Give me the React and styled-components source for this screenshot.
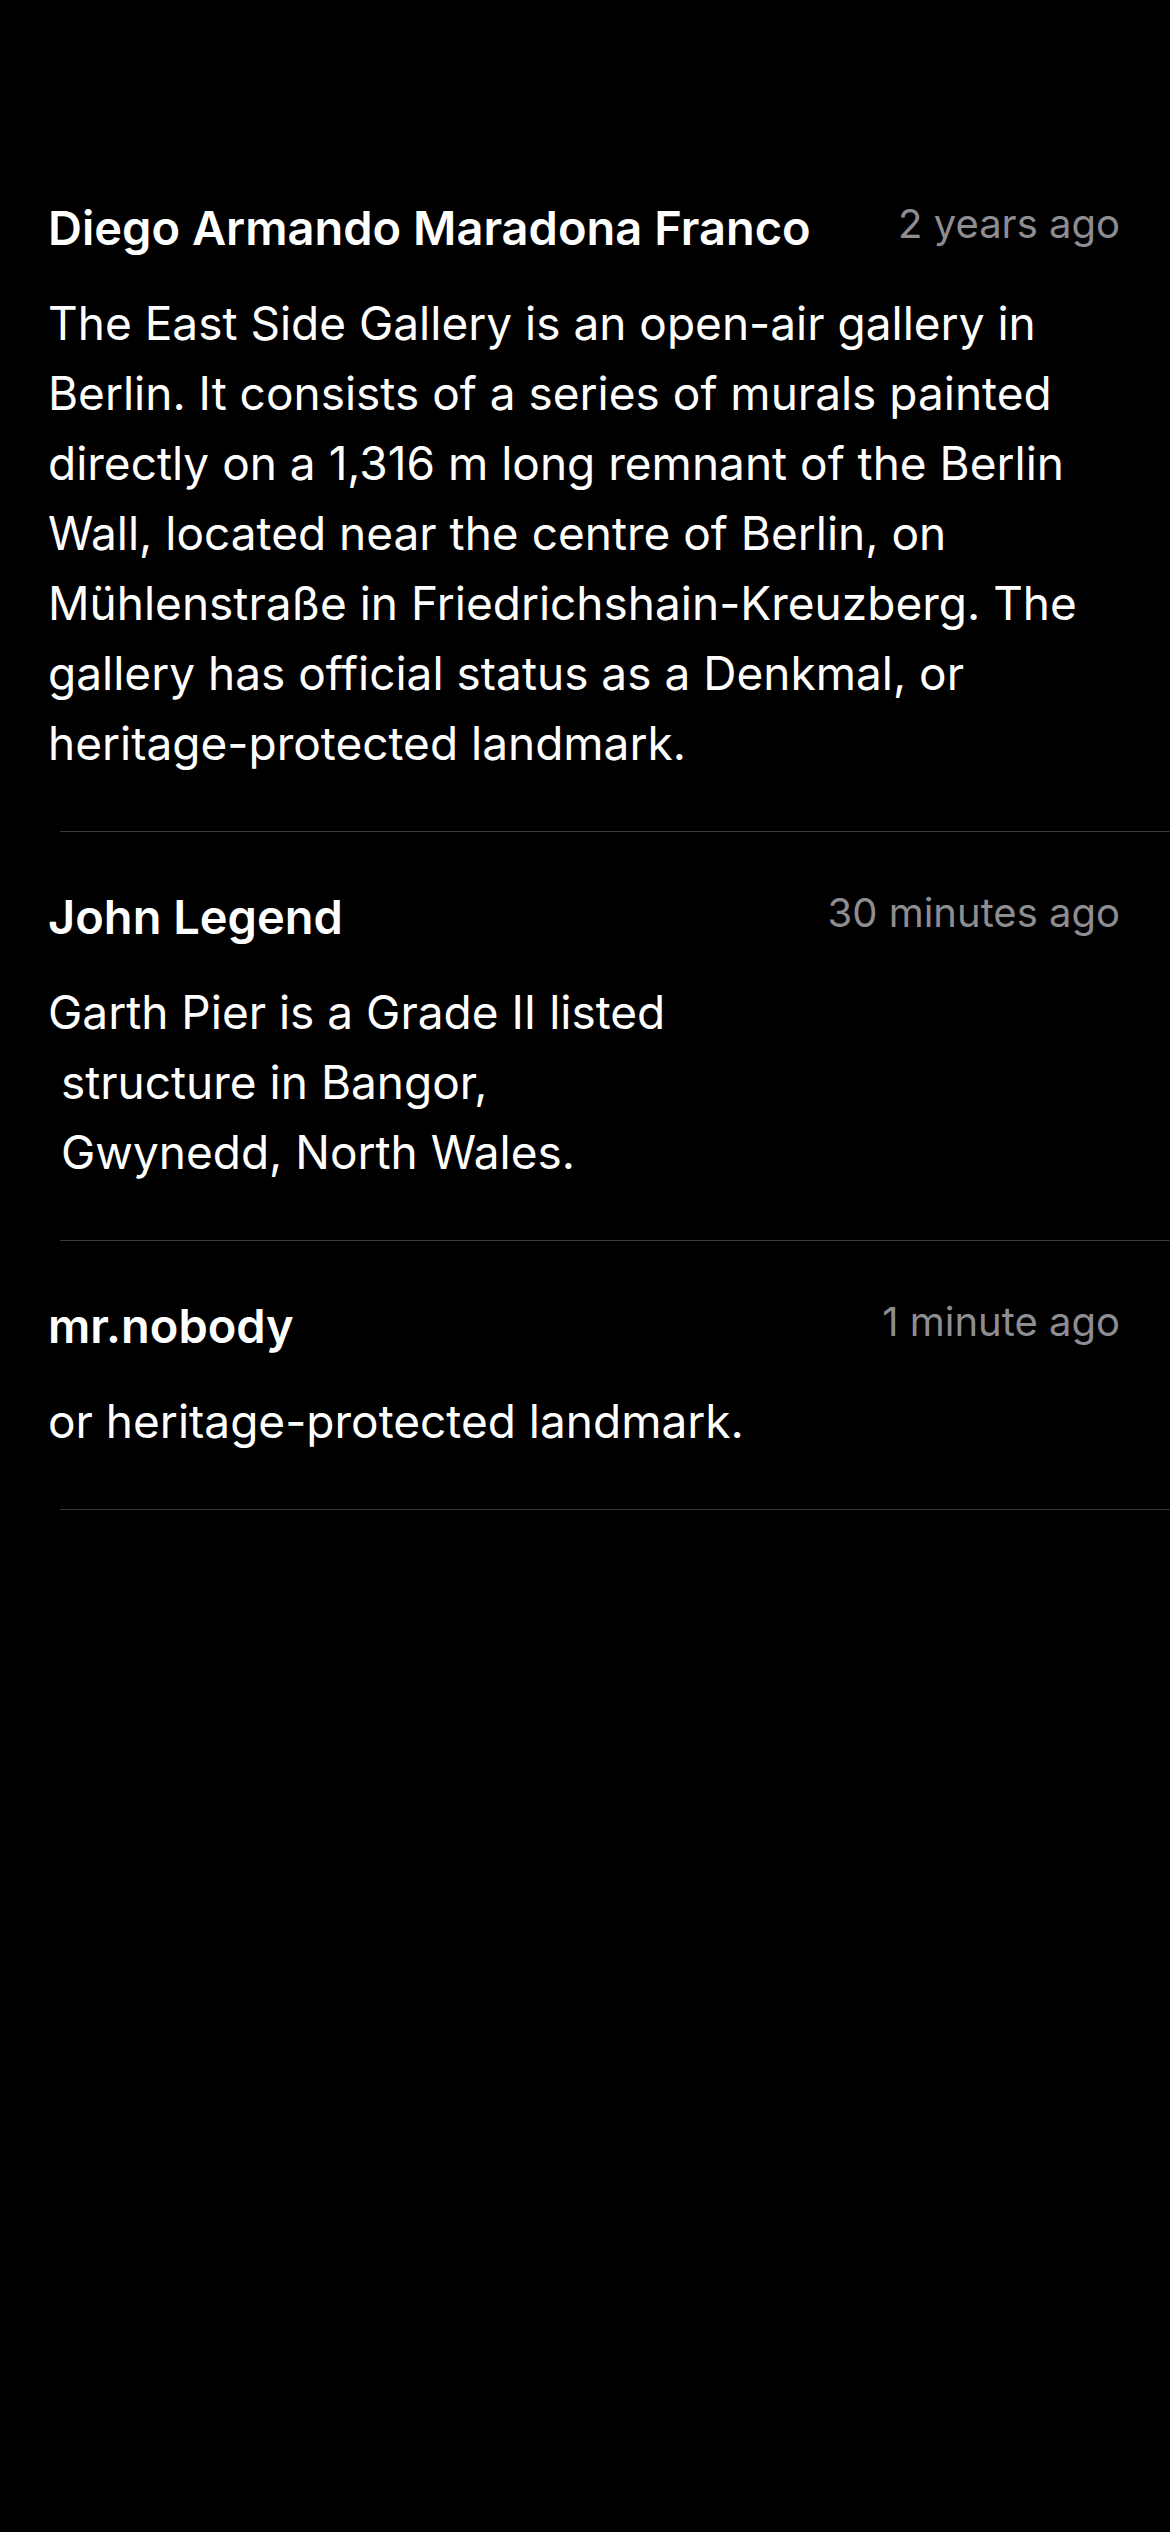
import React from "react";
import styled, { createGlobalStyle } from "styled-components";

const GlobalStyle = createGlobalStyle`
  html, body {
    margin: 0;
    padding: 0;
    background: #000000;
  }
  body {
    font-family: Inter, "Noto Sans", "Liberation Sans", sans-serif;
    -webkit-font-smoothing: antialiased;
  }
`;

const Screen = styled.div`
  width: 1170px;
  min-height: 2532px;
  background: #000000;
  padding-top: 143px;
  box-sizing: border-box;
`;

const CommentList = styled.div`
  display: flex;
  flex-direction: column;
`;

const Comment = styled.div`
  display: flex;
  flex-direction: column;
`;

const Inner = styled.div`
  padding: 57px 50px 53px 48px;
`;

const Header = styled.div`
  display: flex;
  justify-content: space-between;
  align-items: flex-start;
  gap: 40px;
`;

const Author = styled.div`
  color: #ffffff;
  font-size: 47px;
  font-weight: 600;
  line-height: 56px;
`;

const Time = styled.div`
  color: #8d8d92;
  font-size: 40px;
  line-height: 48px;
  white-space: nowrap;
`;

const Body = styled.div`
  margin-top: 32px;
  color: #ffffff;
  font-size: 46px;
  line-height: 70px;
  white-space: pre-wrap;
`;

const Divider = styled.div`
  margin-left: 60px;
  height: 1px;
  background: #3a3a3c;
`;

const comments = [
  {
    id: 1,
    author: "Diego Armando Maradona Franco",
    time: "2 years ago",
    text:
      "The East Side Gallery is an open-air gallery in Berlin. It consists of a series of murals painted directly on a 1,316 m long remnant of the Berlin Wall, located near the centre of Berlin, on Mühlenstraße in Friedrichshain-Kreuzberg. The gallery has official status as a Denkmal, or heritage-protected landmark.",
  },
  {
    id: 2,
    author: "John Legend",
    time: "30 minutes ago",
    text: "Garth Pier is a Grade II listed\n structure in Bangor,\n Gwynedd, North Wales.",
  },
  {
    id: 3,
    author: "mr.nobody",
    time: "1 minute ago",
    text: "or heritage-protected landmark.",
  },
];

function App() {
  return (
    <Screen>
      <GlobalStyle />
      <CommentList>
        {comments.map((c) => (
          <Comment key={c.id}>
            <Inner>
              <Header>
                <Author>{c.author}</Author>
                <Time>{c.time}</Time>
              </Header>
              <Body>{c.text}</Body>
            </Inner>
            <Divider />
          </Comment>
        ))}
      </CommentList>
    </Screen>
  );
}

export default App;
